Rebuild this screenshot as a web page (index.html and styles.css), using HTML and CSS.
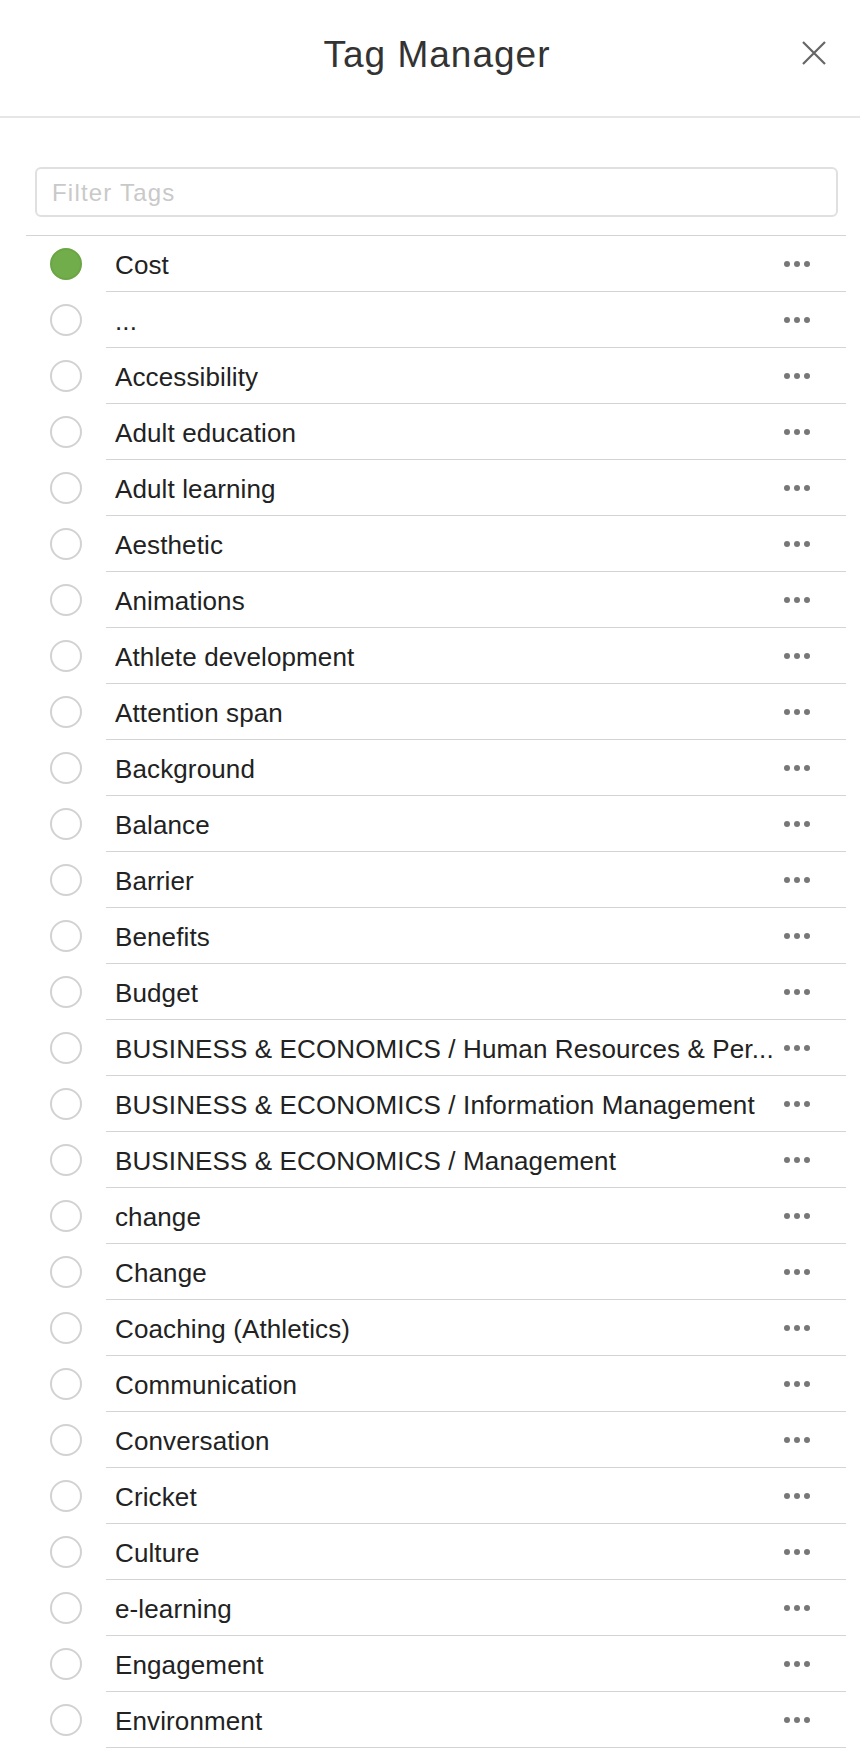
FILE: index.html
```html
<!DOCTYPE html>
<html lang="en">
<head>
    <meta charset="UTF-8">
    <meta name="viewport" content="width=device-width, initial-scale=1.0">
    <title>Tag Manager</title>
    <link rel="stylesheet" href="styles.css">
</head>
<body>
    <div class="header">
        <span></span>
        <h1 class="title">Tag Manager</h1>
        <button class="close" aria-label="Close">
            <svg width="24" height="24" viewBox="0 0 24 24"><path d="M1 1L23 23M23 1L1 23" stroke="#666" stroke-width="2.2" fill="none"/></svg>
        </button>
    </div>

    <div class="filter">
        <input type="text" placeholder="Filter Tags">
    </div>

    <ul class="tags">
        <li class="tag"><span class="check"><span class="circle on"></span></span><div class="row"><span class="name">Cost</span><span class="more"><i></i><i></i><i></i></span></div></li>
        <li class="tag"><span class="check"><span class="circle"></span></span><div class="row"><span class="name">...</span><span class="more"><i></i><i></i><i></i></span></div></li>
        <li class="tag"><span class="check"><span class="circle"></span></span><div class="row"><span class="name">Accessibility</span><span class="more"><i></i><i></i><i></i></span></div></li>
        <li class="tag"><span class="check"><span class="circle"></span></span><div class="row"><span class="name">Adult education</span><span class="more"><i></i><i></i><i></i></span></div></li>
        <li class="tag"><span class="check"><span class="circle"></span></span><div class="row"><span class="name">Adult learning</span><span class="more"><i></i><i></i><i></i></span></div></li>
        <li class="tag"><span class="check"><span class="circle"></span></span><div class="row"><span class="name">Aesthetic</span><span class="more"><i></i><i></i><i></i></span></div></li>
        <li class="tag"><span class="check"><span class="circle"></span></span><div class="row"><span class="name">Animations</span><span class="more"><i></i><i></i><i></i></span></div></li>
        <li class="tag"><span class="check"><span class="circle"></span></span><div class="row"><span class="name">Athlete development</span><span class="more"><i></i><i></i><i></i></span></div></li>
        <li class="tag"><span class="check"><span class="circle"></span></span><div class="row"><span class="name">Attention span</span><span class="more"><i></i><i></i><i></i></span></div></li>
        <li class="tag"><span class="check"><span class="circle"></span></span><div class="row"><span class="name">Background</span><span class="more"><i></i><i></i><i></i></span></div></li>
        <li class="tag"><span class="check"><span class="circle"></span></span><div class="row"><span class="name">Balance</span><span class="more"><i></i><i></i><i></i></span></div></li>
        <li class="tag"><span class="check"><span class="circle"></span></span><div class="row"><span class="name">Barrier</span><span class="more"><i></i><i></i><i></i></span></div></li>
        <li class="tag"><span class="check"><span class="circle"></span></span><div class="row"><span class="name">Benefits</span><span class="more"><i></i><i></i><i></i></span></div></li>
        <li class="tag"><span class="check"><span class="circle"></span></span><div class="row"><span class="name">Budget</span><span class="more"><i></i><i></i><i></i></span></div></li>
        <li class="tag"><span class="check"><span class="circle"></span></span><div class="row"><span class="name">BUSINESS &amp; ECONOMICS / Human Resources &amp; Per...</span><span class="more"><i></i><i></i><i></i></span></div></li>
        <li class="tag"><span class="check"><span class="circle"></span></span><div class="row"><span class="name">BUSINESS &amp; ECONOMICS / Information Management</span><span class="more"><i></i><i></i><i></i></span></div></li>
        <li class="tag"><span class="check"><span class="circle"></span></span><div class="row"><span class="name">BUSINESS &amp; ECONOMICS / Management</span><span class="more"><i></i><i></i><i></i></span></div></li>
        <li class="tag"><span class="check"><span class="circle"></span></span><div class="row"><span class="name">change</span><span class="more"><i></i><i></i><i></i></span></div></li>
        <li class="tag"><span class="check"><span class="circle"></span></span><div class="row"><span class="name">Change</span><span class="more"><i></i><i></i><i></i></span></div></li>
        <li class="tag"><span class="check"><span class="circle"></span></span><div class="row"><span class="name">Coaching (Athletics)</span><span class="more"><i></i><i></i><i></i></span></div></li>
        <li class="tag"><span class="check"><span class="circle"></span></span><div class="row"><span class="name">Communication</span><span class="more"><i></i><i></i><i></i></span></div></li>
        <li class="tag"><span class="check"><span class="circle"></span></span><div class="row"><span class="name">Conversation</span><span class="more"><i></i><i></i><i></i></span></div></li>
        <li class="tag"><span class="check"><span class="circle"></span></span><div class="row"><span class="name">Cricket</span><span class="more"><i></i><i></i><i></i></span></div></li>
        <li class="tag"><span class="check"><span class="circle"></span></span><div class="row"><span class="name">Culture</span><span class="more"><i></i><i></i><i></i></span></div></li>
        <li class="tag"><span class="check"><span class="circle"></span></span><div class="row"><span class="name">e-learning</span><span class="more"><i></i><i></i><i></i></span></div></li>
        <li class="tag"><span class="check"><span class="circle"></span></span><div class="row"><span class="name">Engagement</span><span class="more"><i></i><i></i><i></i></span></div></li>
        <li class="tag"><span class="check"><span class="circle"></span></span><div class="row"><span class="name">Environment</span><span class="more"><i></i><i></i><i></i></span></div></li>
    </ul>
</body>
</html>
```

FILE: styles.css
```css
body {
    font-family: "Liberation Sans", Arial, sans-serif;
    margin: 0;
    background-color: #fff;
    color: #222;
}

.header {
    display: grid;
    grid-template-columns: 1fr auto 1fr;
    align-items: center;
    align-content: start;
    height: 118px;
    padding-top: 34px;
    box-sizing: border-box;
    border-bottom: 2px solid #e6e6e6;
}

.title {
    margin: 0 0 0 14px;
    font-size: 37px;
    font-weight: normal;
    letter-spacing: 1px;
    line-height: 42px;
    color: #333;
}

.close {
    justify-self: end;
    margin: 0 34px 4px 0;
    padding: 0;
    width: 24px;
    height: 24px;
    border: none;
    background: none;
    cursor: pointer;
}

.close svg {
    display: block;
}

.filter {
    padding: 49px 22px 0 35px;
}

.filter input {
    display: block;
    width: 100%;
    height: 50px;
    box-sizing: border-box;
    padding: 2px 15px 0;
    border: 2px solid #e0e0e0;
    border-radius: 6px;
    font-family: inherit;
    font-size: 24px;
    letter-spacing: 1.2px;
    outline: none;
}

.filter input::placeholder {
    color: #c9c9c9;
}

.tags {
    list-style: none;
    margin: 18px 14px 0 26px;
    padding: 0;
    border-top: 1px solid #d4d4d4;
}

.tag {
    display: flex;
    height: 56px;
}

.check {
    width: 80px;
    flex: none;
    display: flex;
    align-items: center;
    justify-content: center;
}

.circle {
    width: 32px;
    height: 32px;
    box-sizing: border-box;
    border: 2px solid #d2d2d2;
    border-radius: 50%;
}

.circle.on {
    background-color: #72ad4b;
    border-color: #6ba545;
}

.row {
    flex: 1;
    min-width: 0;
    display: flex;
    align-items: center;
    padding-left: 9px;
    border-bottom: 1px solid #d4d4d4;
}

.name {
    flex: 1;
    min-width: 0;
    padding-top: 3px;
    font-size: 26px;
    letter-spacing: 0.12px;
    white-space: nowrap;
    overflow: hidden;
}

.more {
    display: flex;
    gap: 4px;
    margin: 0 36px 0 10px;
}

.more i {
    width: 6px;
    height: 6px;
    border-radius: 50%;
    background-color: #777;
}
```
